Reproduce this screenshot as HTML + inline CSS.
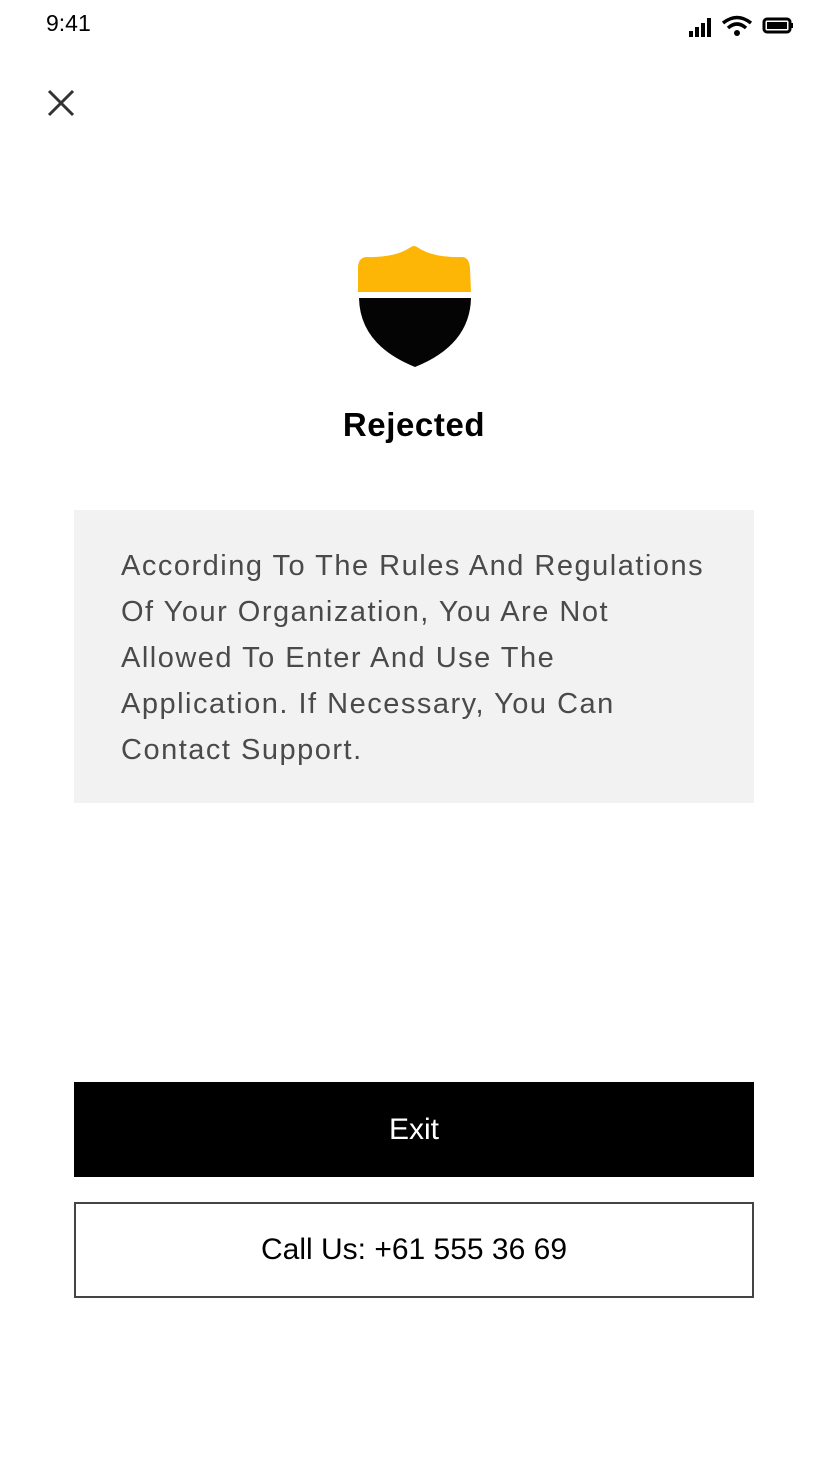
<!DOCTYPE html>
<html><head><meta charset="utf-8"><style>
*{margin:0;padding:0;box-sizing:border-box}
body{width:828px;height:1472px;background:#fff;font-family:"Liberation Sans",sans-serif;position:relative;overflow:hidden}
.abs{position:absolute}
.time{left:46px;top:10px;font-size:23px;color:#000}
.title{left:0;width:828px;top:406px;text-align:center;font-size:33px;font-weight:bold;color:#000;letter-spacing:0.6px}
.box{left:74px;top:510px;width:680px;height:293px;background:#f2f2f2}
.txt{left:121px;top:543px;font-size:29px;line-height:46px;color:#4a4a4a;white-space:nowrap;letter-spacing:1.5px}
.exit{left:74px;top:1082px;width:680px;height:95px;background:#000;color:#fff;font-size:30px;display:flex;align-items:center;justify-content:center}
.call{left:74px;top:1202px;width:680px;height:96px;border:2px solid #444;color:#000;font-size:30px;display:flex;align-items:center;justify-content:center}
</style></head><body>
<div class="abs time">9:41</div>
<svg class="abs" style="left:686px;top:14px" width="110" height="26" viewBox="0 0 110 26">
<rect x="3" y="17" width="4" height="6" fill="#000"/><rect x="9" y="13" width="4" height="10" fill="#000"/><rect x="15" y="9" width="4" height="14" fill="#000"/><rect x="21" y="4" width="4" height="19" fill="#000"/>
<path d="M37 9 Q51 -2 65 9" stroke="#000" stroke-width="3.5" fill="none"/>
<path d="M42 14 Q51 6 60 14" stroke="#000" stroke-width="3.5" fill="none"/>
<circle cx="51" cy="19" r="3" fill="#000"/>
<rect x="78" y="5" width="26" height="13" rx="3" stroke="#000" stroke-width="3" fill="none"/>
<rect x="81" y="8" width="20" height="7" fill="#000"/>
<rect x="105" y="9" width="2" height="5" fill="#000"/>
</svg>
<svg class="abs" style="left:46px;top:88px" width="30" height="30" viewBox="0 0 30 30"><path d="M3 3L27 27M27 3L3 27" stroke="#333" stroke-width="3"/></svg>
<svg class="abs" style="left:350px;top:240px" width="130" height="135" viewBox="350 240 130 135">
<path d="M358 292 L358 268 Q358 258 366 257 Q395 258 411 247 Q414 245 417 247 Q433 258 462 257 Q469 257 470 268 L471 292 Z" fill="#fdb606"/>
<path d="M359 298 L471 298 Q470 345 415 367 Q360 345 359 298 Z" fill="#030403"/>
</svg>
<div class="abs title">Rejected</div>
<div class="abs box"></div>
<div class="abs txt">According To The Rules And Regulations<br>Of Your Organization, You Are Not<br>Allowed To Enter And Use The<br>Application. If Necessary, You Can<br>Contact Support.</div>
<div class="abs exit">Exit</div>
<div class="abs call">Call Us: +61 555 36 69</div>
</body></html>
